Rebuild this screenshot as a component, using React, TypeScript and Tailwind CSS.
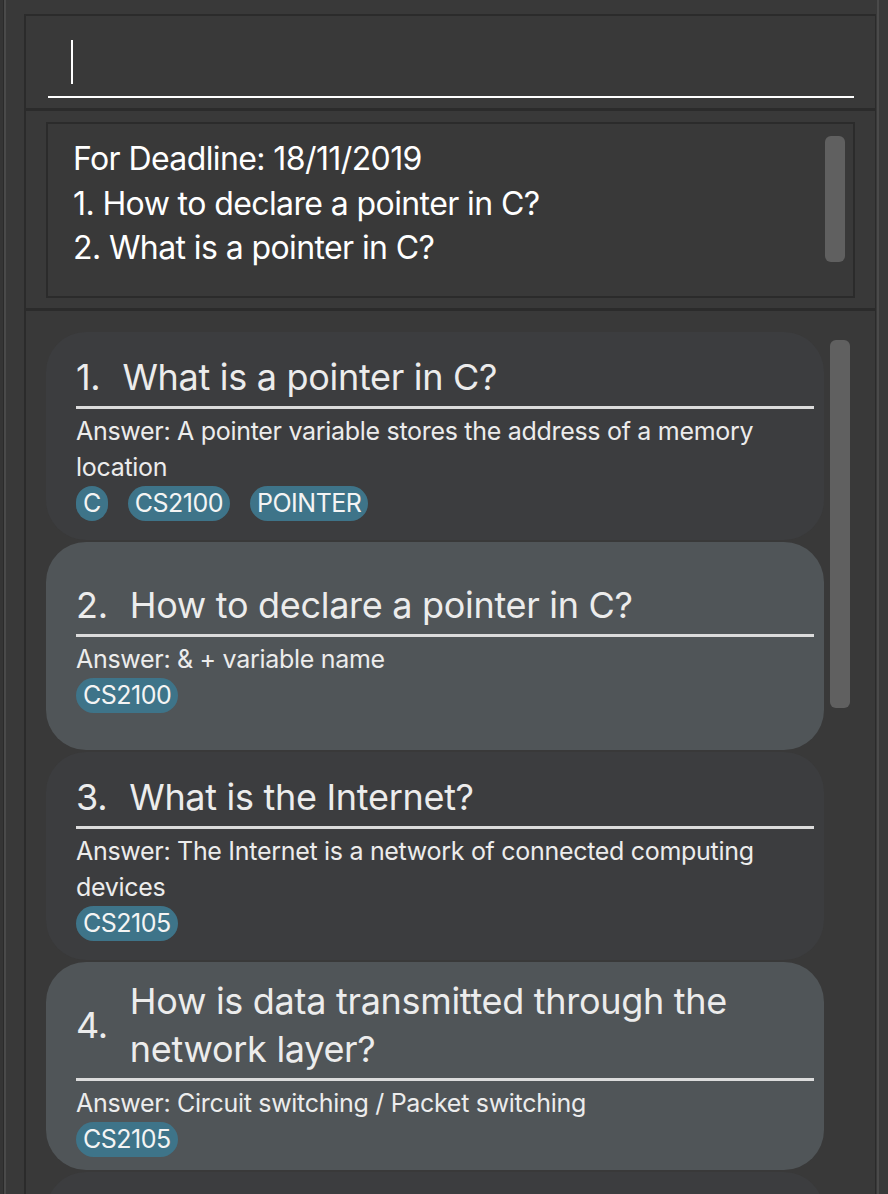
import React from 'react'

type Card = {
  num: string
  title: string
  answer: string
  tags: string[]
  light: boolean
}

const cards: Card[] = [
  { num: '1.', title: 'What is a pointer in C?', answer: 'A pointer variable stores the address of a memory location', tags: ['C', 'CS2100', 'POINTER'], light: false },
  { num: '2.', title: 'How to declare a pointer in C?', answer: '& + variable name', tags: ['CS2100'], light: true },
  { num: '3.', title: 'What is the Internet?', answer: 'The Internet is a network of connected computing devices', tags: ['CS2105'], light: false },
  { num: '4.', title: 'How is data transmitted through the network layer?', answer: 'Circuit switching / Packet switching', tags: ['CS2105'], light: true },
  { num: '5.', title: 'What is TCP?', answer: 'Transmission Control Protocol', tags: ['CS2105'], light: false },
]

function FlashCard({ card }: { card: Card }) {
  return (
    <div
      className={`flex h-[208px] shrink-0 flex-col justify-center rounded-[40px] pl-[30px] pr-[10px] ${card.light ? 'bg-[#505558]' : 'bg-[#3c3d3f]'}`}
    >
      <div className="flex items-center gap-[22px] border-b-[3px] border-[#dcdcdc] pb-[5px] pt-[2px] text-[#ececec]">
        <span className="text-[36px] leading-[40px] tracking-[-0.3px]">{card.num}</span>
        <span className="w-[640px] text-[36px] leading-[48px] tracking-[-0.3px]">{card.title}</span>
      </div>
      <div className="mt-[4px] pr-[40px] text-[25px] leading-[36px] tracking-[-0.3px] text-[#ececec]">Answer: {card.answer}</div>
      <div className="mt-[1px] flex gap-[20px]">
        {card.tags.map((t) => (
          <span key={t} className="rounded-full bg-[#3e7489] px-[7px] text-[25px] leading-[35px] tracking-[-0.5px] text-[#f4f4f4]">
            {t}
          </span>
        ))}
      </div>
    </div>
  )
}

export default function App() {
  return (
    <div className="flex h-[1194px] w-[888px] overflow-hidden bg-[#393939]" style={{ fontFamily: 'Inter, "Noto Sans", sans-serif' }}>
      {/* left edge */}
      <div className="flex w-[24px] shrink-0">
        <div className="w-[3px] bg-[#353535]" />
        <div className="w-[1px] bg-[#2b2b2b]" />
        <div className="w-[2px] bg-[#4a4a4a]" />
      </div>

      <div className="mt-[14px] flex w-[852px] shrink-0 flex-col border-l-2 border-r border-t-2 border-[#2b2b2b]">
        {/* command box */}
        <div className="h-[92px] shrink-0 px-[22px] pt-[24px]">
          <div className="ml-[23px] h-[44px] w-[2px] bg-white" />
          <div className="mt-[12px] h-[2px] w-[806px] bg-white" />
        </div>
        <div className="h-[3px] shrink-0 bg-[#2b2b2b]" />

        {/* result display */}
        <div className="h-[197px] shrink-0 px-[20px] pt-[11px]">
          <div className="relative h-[176px] border-2 border-[#2b2b2b] pl-[25px] pt-[13px] text-[32px] leading-[44.5px] tracking-[-0.6px] text-white">
            <div>For Deadline: 18/11/2019</div>
            <div>1. How to declare a pointer in C?</div>
            <div>2. What is a pointer in C?</div>
            <div className="absolute right-[8px] top-[12px] h-[126px] w-[20px] rounded-[6px] bg-[#606060]" />
          </div>
        </div>
        <div className="h-[3px] shrink-0 bg-[#2b2b2b]" />

        {/* list */}
        <div className="relative flex-1 overflow-hidden pl-[20px] pt-[21px]">
          <div className="flex w-[778px] flex-col gap-[2px]">
            {cards.map((c) => (
              <FlashCard key={c.num} card={c} />
            ))}
          </div>
          <div className="absolute left-[804px] top-[29px] h-[368px] w-[20px] rounded-[6px] bg-[#606060]" />
        </div>
      </div>

      {/* right edge */}
      <div className="ml-[1px] w-[2px] shrink-0 bg-[#4a4a4a]" />
    </div>
  )
}
